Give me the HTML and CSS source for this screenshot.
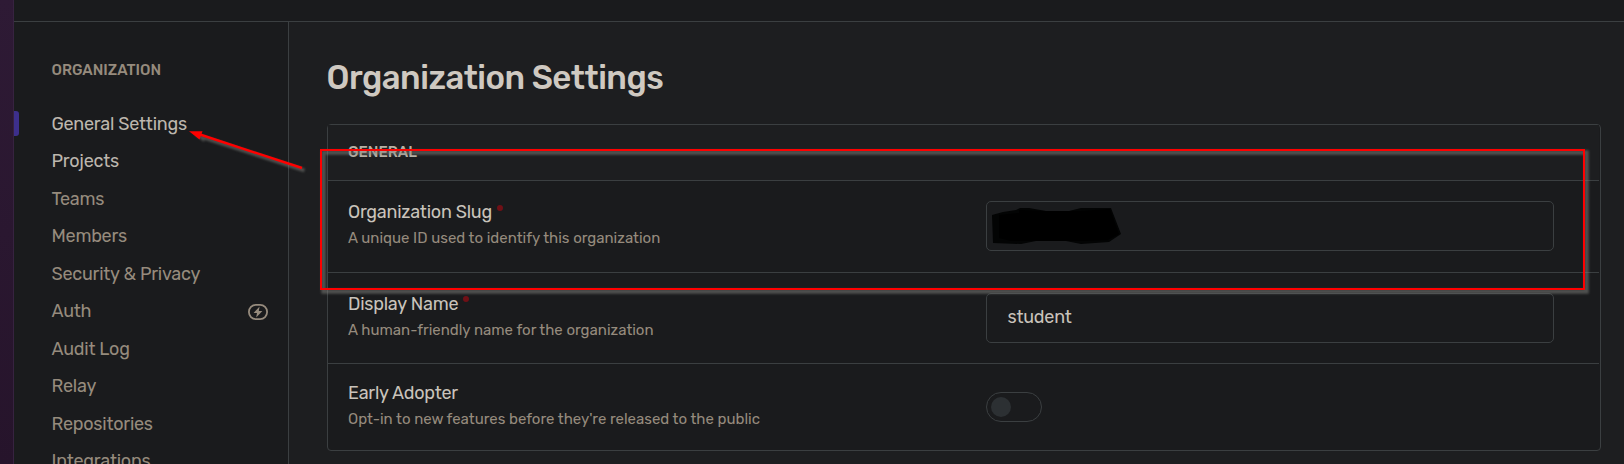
FILE: index.html
```html
<!DOCTYPE html>
<html lang="en">
<head>
<meta charset="utf-8">
<title>Organization Settings</title>
<link rel="stylesheet" href="styles.css">
</head>
<body>
<div class="app">
  <div class="rail"></div>
  <div class="shell">
    <header class="topbar"></header>
    <div class="body">
      <nav class="sidebar">
        <h2 class="nav-title">ORGANIZATION</h2>
        <a class="nav-item active">General Settings</a>
        <a class="nav-item bright">Projects</a>
        <a class="nav-item">Teams</a>
        <a class="nav-item">Members</a>
        <a class="nav-item">Security &amp; Privacy</a>
        <a class="nav-item">Auth
          <svg class="bolt" width="20" height="16" viewBox="0 0 20 16"><rect x=".9" y=".9" width="18.2" height="14.2" rx="7" fill="none" stroke="currentColor" stroke-width="1.8"/><path d="M11.600 2.400 5.600 8.900h3.400l-.8 4.700 6.200-6.600h-3.600z" fill="currentColor"/></svg>
        </a>
        <a class="nav-item">Audit Log</a>
        <a class="nav-item">Relay</a>
        <a class="nav-item">Repositories</a>
        <a class="nav-item">Integrations</a>
      </nav>
      <main class="content">
        <h1 class="title">Organization Settings</h1>
        <section class="panel">
          <div class="panel-head">GENERAL</div>
          <div class="row row-slug">
            <div class="info">
              <div class="label">Organization Slug<i class="dot"></i></div>
              <div class="help">A unique ID used to identify this organization</div>
            </div>
            <div class="input">
              <svg class="scribble" width="132" height="40" viewBox="0 0 132 40"><path d="M1 9 12 6 25 4 29 2H38L55 5H78L90 2H120L130 28 118 36 90 38 70 34H50L30 38 2 37Z" fill="#030404"/><path d="M8 9 28 7V4L54 5H90L119 3 128 28 117 34 90 35H20L8 32Z" fill="#000"/></svg>
            </div>
          </div>
          <div class="row row-name">
            <div class="info">
              <div class="label">Display Name<i class="dot"></i></div>
              <div class="help">A human-friendly name for the organization</div>
            </div>
            <div class="input">student</div>
          </div>
          <div class="row row-early">
            <div class="info">
              <div class="label">Early Adopter</div>
              <div class="help">Opt-in to new features before they're released to the public</div>
            </div>
            <div class="toggle"><i class="knob"></i></div>
          </div>
        </section>
      </main>
    </div>
  </div>
  <svg class="markup" width="1624" height="464" viewBox="0 0 1624 464">
    <defs><filter id="soft" x="-5%" y="-20%" width="110%" height="140%"><feGaussianBlur stdDeviation=".8"/></filter></defs>
    <g filter="url(#soft)" stroke="#848580" fill="none" opacity=".5">
      <rect x="323.5" y="152.500" width="1263" height="139" stroke-width="4.500"/>
      <path d="M203 137.500 304.500 170.500" stroke-width="3.500"/>
      <path d="M194 134 204 142 205 136Z" fill="#848580" stroke="none"/>
    </g>
    <rect x="321" y="150" width="1263" height="139" fill="none" stroke="#f00" stroke-width="2"/>
    <path d="M200 134.500 302 168" stroke="#f00" stroke-width="2.400"/>
    <path d="M189 131.300 202.500 131.300 199.500 139.500Z" fill="#f00"/>
  </svg>
</div>
</body>
</html>
```
FILE: styles.css
```css
* { box-sizing: border-box; }
body { margin: 0; background: #1d1e20; font-family: Rubik, Roboto, "Liberation Sans", sans-serif; color: #c9c3bb; }
.app { position: relative; display: flex; width: 1624px; height: 464px; overflow: hidden; }
.rail { width: 14px; background: linear-gradient(#2e1a35, #26142b); border-right: 1px solid #372340; }
.shell { flex: 1; display: flex; flex-direction: column; }
.topbar { height: 22px; background: #1a1b1d; border-bottom: 1px solid #3b3f41; }
.body { flex: 1; display: flex; min-height: 0; }
.sidebar { width: 275px; background: #1a1b1d; border-right: 1px solid #3b3f41; padding: 38px 20px 0 0; overflow: hidden; }
.nav-title { margin: 0 0 25px 37.5px; font-size: 15px; line-height: 20px; font-weight: 500; color: #968b7d; }
.nav-item { display: flex; align-items: center; justify-content: space-between; height: 37.5px; padding-left: 37.5px; font-size: 18px; letter-spacing: -0.24px; color: #968b7d; white-space: nowrap; }
.nav-item.active, .nav-item.bright { color: #bdb7ae; }
.nav-item.active::before { content: ""; width: 5px; height: 25px; margin: 0 32.5px 0 -37.5px; background: #3d2f8c; border-radius: 0 3px 3px 0; }
.nav-item.active { justify-content: flex-start; }
.bolt { margin-top: 1px; }
.content { flex: 1; padding: 36px 23px 0 38px; }
.title { margin: 0 0 26px -0.5px; font-size: 33px; line-height: 40px; height: 40px; font-weight: 500; letter-spacing: -0.5px; color: #cfc9c1; white-space: nowrap; }
.panel { height: 327px; border: 1px solid #3b3f41; border-radius: 4px; background: #1a1b1d; padding-right: 1px; }
.panel-head { height: 56px; border-bottom: 1px solid #3b3f41; padding: 17px 0 0 20px; font-size: 15px; line-height: 20px; font-weight: 500; background: #1d1e20; color: #b8b0a5; }
.row { display: grid; grid-template-columns: 638px 568px; padding-left: 20px; border-bottom: 1px solid #3b3f41; }
.row-slug { height: 92px; padding-top: 20px; }
.row-name { height: 91px; padding-top: 20px; }
.row-early { height: 87px; padding-top: 17px; border-bottom: 0; }
.label { display: flex; align-items: flex-start; height: 24px; font-size: 18px; letter-spacing: -0.24px; line-height: 24px; color: #c9c3bb; white-space: nowrap; }
.help { margin-top: 2px; font-size: 15px; line-height: 24px; color: #968b7d; white-space: nowrap; }
.dot { width: 6px; height: 6px; margin: 5px 0 0 5.5px; border-radius: 50%; background: #701016; }
.row-slug .info, .row-name .info { margin-top: -1px; }
.row-name .dot { margin: 4px 0 0 5px; }
.input { height: 50px; border: 1px solid #3b3f41; border-radius: 5px; padding-left: 20.5px; font-size: 18px; letter-spacing: -0.24px; line-height: 46px; color: #c9c3bb; }
.scribble { display: block; margin: 4px 0 0 -17px; }
.toggle { width: 56px; height: 30px; margin-top: 11px; padding: 4px; border: 1px solid #3b3f41; border-radius: 15px; }
.knob { display: block; width: 20px; height: 20px; border-radius: 50%; background: #2c3033; }
.markup { position: absolute; left: 0; top: 0; }
```
